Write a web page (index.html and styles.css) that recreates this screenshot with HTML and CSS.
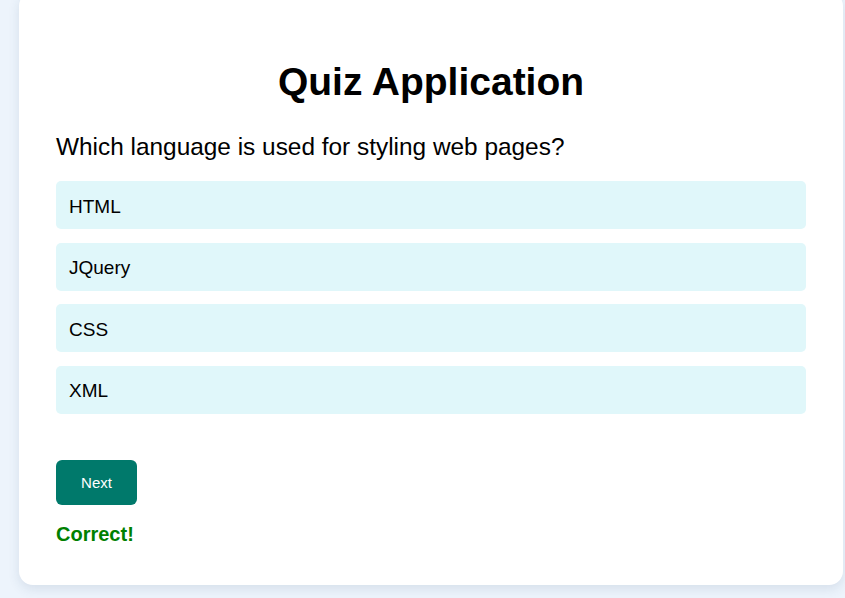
FILE: index.html
```html
<!DOCTYPE html>
<html lang="en">
<head>
<meta charset="utf-8">
<title>Quiz Application</title>
<link rel="stylesheet" href="styles.css">
</head>
<body>
  <div class="card">
    <h1 class="title">Quiz Application</h1>
    <p class="question">Which language is used for styling web pages?</p>
    <ul class="options">
      <li class="option">HTML</li>
      <li class="option">JQuery</li>
      <li class="option">CSS</li>
      <li class="option">XML</li>
    </ul>
    <button class="next-btn" type="button">Next</button>
    <p class="result">Correct!</p>
  </div>
</body>
</html>
```

FILE: styles.css
```css
html, body {
  margin: 0;
  padding: 0;
}

body {
  background: #edf4fc;
  font-family: "Liberation Sans", Arial, sans-serif;
  color: #000;
  overflow: hidden;
  height: 598px;
}

.card {
  box-sizing: border-box;
  width: 824px;
  height: 593px;
  margin: -8px 0 0 19px;
  padding: 68px 37px 0;
  background: #fff;
  border-radius: 14px;
  box-shadow: 0 4px 12px rgba(40, 70, 110, 0.12);
}

.title {
  margin: 0;
  font-size: 39px;
  line-height: 44px;
  font-weight: bold;
  text-align: center;
}

.question {
  margin: 29px 0 0;
  font-size: 24.4px;
  line-height: 28px;
}

.options {
  list-style: none;
  margin: 20px 0 0;
  padding: 0;
  display: flex;
  flex-direction: column;
  gap: 13.67px;
}

.option {
  box-sizing: border-box;
  height: 48px;
  display: flex;
  align-items: center;
  padding: 3px 13px 0;
  background: #e0f7fa;
  border-radius: 5px;
  font-size: 19px;
  line-height: 22px;
}

.next-btn {
  display: block;
  margin-top: 46px;
  width: 81px;
  height: 45px;
  border: none;
  border-radius: 6px;
  background: #00796b;
  color: #fff;
  font-family: "Liberation Sans", Arial, sans-serif;
  font-size: 15px;
  font-weight: 300;
  padding: 0;
}

.result {
  margin: 18px 0 0;
  font-size: 20px;
  line-height: 23px;
  font-weight: bold;
  color: #008000;
}
```
